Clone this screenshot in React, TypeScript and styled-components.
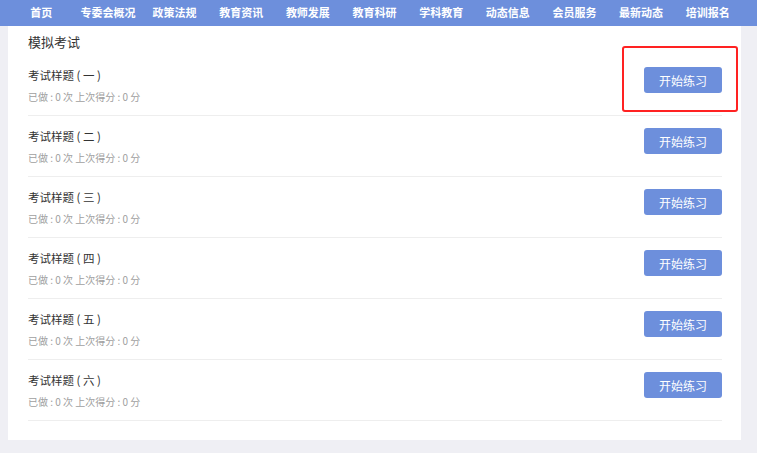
import React from 'react';
import styled, { createGlobalStyle } from 'styled-components';

const GlobalStyle = createGlobalStyle`
  html, body {
    margin: 0;
    padding: 0;
    background: #efeff4;
    font-family: "Noto Sans CJK SC", "Liberation Sans", sans-serif;
  }
`;

const NAV_ITEMS = [
  '首页',
  '专委会概况',
  '政策法规',
  '教育资讯',
  '教师发展',
  '教育科研',
  '学科教育',
  '动态信息',
  '会员服务',
  '最新动态',
  '培训报名',
];

const EXAMS = ['一', '二', '三', '四', '五', '六'];

const NavBar = styled.div`
  background: #6d8fdc;
  height: 26px;
`;

const NavInner = styled.ul`
  display: flex;
  margin: 0 0 0 8px;
  padding: 0;
  width: 733px;
  list-style: none;
`;

const NavItem = styled.li`
  flex: 1;
  text-align: center;
  color: #fff;
  font-size: 11px;
  font-weight: bold;
  line-height: 24px;
`;

const Panel = styled.div`
  position: relative;
  margin-left: 8px;
  width: 733px;
  box-sizing: border-box;
  background: #fff;
  padding: 4px 19px 19px 20px;
`;

const NextPanel = styled.div`
  margin: 13px 0 0 8px;
  width: 733px;
  height: 20px;
  background: #fff;
`;

const Title = styled.div`
  font-size: 13px;
  color: #333;
  line-height: 24px;
  margin-bottom: 1px;
`;

const Row = styled.div`
  display: flex;
  justify-content: space-between;
  align-items: flex-start;
  height: 60px;
  border-bottom: 1px solid #eee;
`;

const RowText = styled.div`
  padding-top: 12px;
`;

const RowName = styled.div`
  font-size: 11.5px;
  color: #333;
  line-height: 16px;
`;

const RowMeta = styled.div`
  margin-top: 6px;
  font-size: 10px;
  color: #a0a0a0;
  line-height: 16px;
`;

const StartButton = styled.button`
  margin-top: 12px;
  width: 78px;
  height: 26px;
  border: none;
  border-radius: 3px;
  background: #6d8fdc;
  color: #fff;
  font-family: inherit;
  font-size: 12px;
  cursor: pointer;
`;

const Highlight = styled.div`
  position: absolute;
  left: 614px;
  top: 20px;
  width: 116px;
  height: 66px;
  box-sizing: border-box;
  border: 2px solid #f22;
  border-radius: 3px;
  pointer-events: none;
`;

export default function App() {
  return (
    <>
      <GlobalStyle />
      <NavBar>
        <NavInner>
          {NAV_ITEMS.map(item => (
            <NavItem key={item}>{item}</NavItem>
          ))}
        </NavInner>
      </NavBar>
      <Panel>
        <Title>模拟考试</Title>
        {EXAMS.map(n => (
          <Row key={n}>
            <RowText>
              <RowName>考试样题 ( {n} )</RowName>
              <RowMeta>已做 : 0 次 上次得分 : 0 分</RowMeta>
            </RowText>
            <StartButton>开始练习</StartButton>
          </Row>
        ))}
        <Highlight />
      </Panel>
      <NextPanel />
    </>
  );
}
